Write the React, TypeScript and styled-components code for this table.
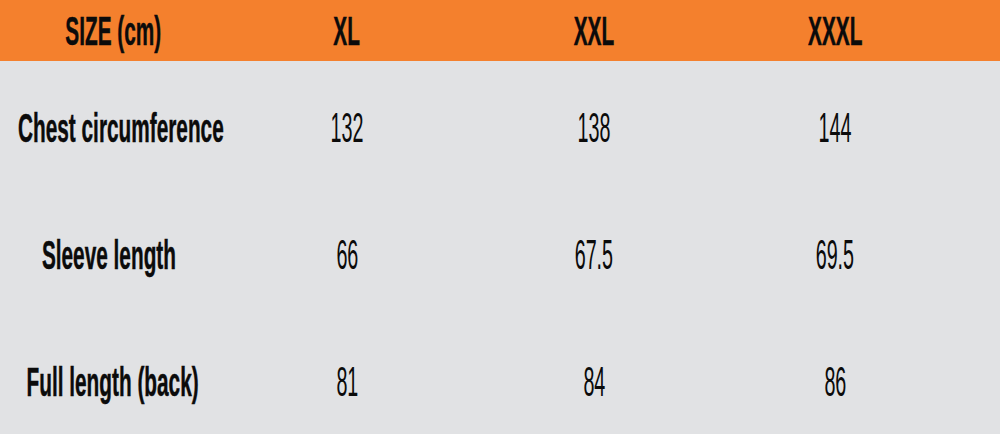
import React from "react";
import styled, { createGlobalStyle } from "styled-components";

const Global = createGlobalStyle`
  html, body { margin: 0; padding: 0; background: #e1e2e4; }
  #root { width: 1000px; height: 434px; overflow: hidden; }
`;

const Table = styled.div`
  width: 1000px;
  height: 434px;
  display: flex;
  flex-direction: column;
  background: #e1e2e4;
  font-family: "Liberation Sans", Arial, sans-serif;
  color: #0b0b0b;
`;

const Row = styled.div<{ $head?: boolean }>`
  display: grid;
  grid-template-columns: 230px 234px 260px 222px;
  align-items: center;
  flex: none;
  height: ${(p) => (p.$head ? 61 : 127)}px;
  background: ${(p) => (p.$head ? "#f4802d" : "transparent")};
`;

const Body = styled.div`
  display: flex;
  flex-direction: column;
  padding-top: 3px;
`;

/* $offset moves the centred text right (positive) or left (negative) */
const Cell = styled.div<{ $offset?: number }>`
  display: flex;
  justify-content: center;
  align-items: center;
  line-height: 1;
  min-width: 0;
  padding-left: ${(p) => Math.max(0, (p.$offset ?? 0) * 2)}px;
  padding-right: ${(p) => Math.max(0, -(p.$offset ?? 0) * 2)}px;
`;

const Label = styled.span`
  display: inline-block;
  white-space: nowrap;
  font-weight: 700;
  font-size: 40px;
  transform: scaleX(0.52);
  -webkit-text-stroke: 0.5px currentColor;
`;

const Value = styled.span`
  display: inline-block;
  white-space: nowrap;
  font-weight: 400;
  font-size: 42px;
  transform: scaleX(0.47);
`;

const sizes = ["XL", "XXL", "XXXL"];
const rows: { label: string; offset: number; values: string[] }[] = [
  { label: "Chest circumference", offset: 6, values: ["132", "138", "144"] },
  { label: "Sleeve length", offset: -6, values: ["66", "67.5", "69.5"] },
  { label: "Full length (back)", offset: -2, values: ["81", "84", "86"] },
];

export default function App() {
  return (
    <>
      <Global />
      <Table>
        <Row $head>
          <Cell $offset={-2}>
            <Label>SIZE (cm)</Label>
          </Cell>
          {sizes.map((s) => (
            <Cell key={s}>
              <Label>{s}</Label>
            </Cell>
          ))}
        </Row>
        <Body>
          {rows.map((r) => (
            <Row key={r.label}>
              <Cell $offset={r.offset}>
                <Label>{r.label}</Label>
              </Cell>
              {r.values.map((v, i) => (
                <Cell key={i}>
                  <Value>{v}</Value>
                </Cell>
              ))}
            </Row>
          ))}
        </Body>
      </Table>
    </>
  );
}
